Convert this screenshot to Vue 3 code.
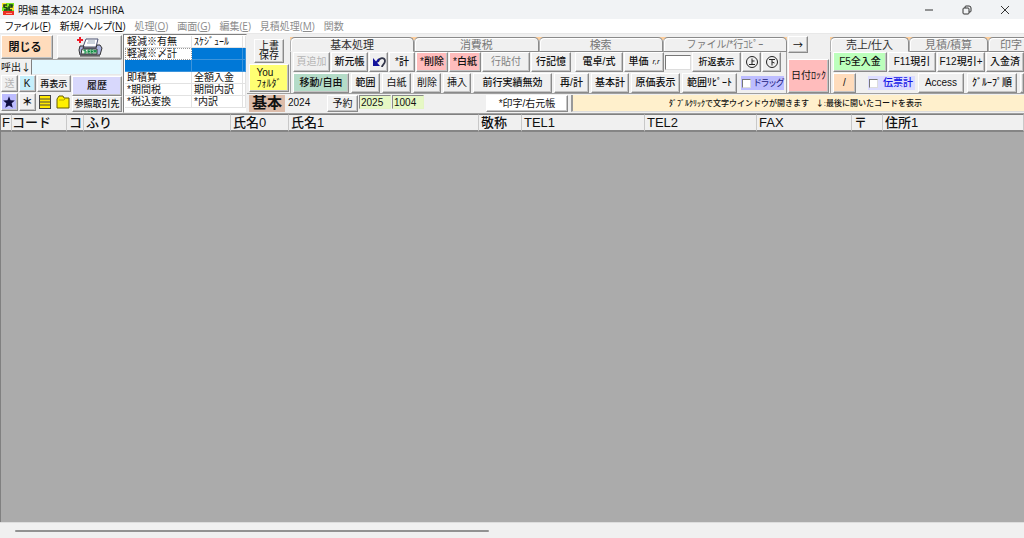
<script setup>
import { ref } from 'vue'

const menus = [
  { label: 'ファイル', key: 'F', on: true },
  { label: '新規/ヘルプ', key: 'N', on: true },
  { label: '処理', key: 'O' },
  { label: '画面', key: 'G' },
  { label: '編集', key: 'E' },
  { label: '見積処理', key: 'M' },
  { label: '関数' },
]
const options = [
  ['軽減※有無', 'ｽｹｼﾞｭｰﾙ', ''],
  ['軽減※〆計', '', 'half'],
  ['', '', 'full'],
  ['即積算', '全額入金', ''],
  ['*期間税', '期間内訳', ''],
  ['*税込変換', '*内訳', ''],
]
const columns = [
  ['F', 'flag'], ['コード', 'code'], ['コ', 'ko'], ['ふり', 'kana'], ['氏名0', 'name0'], ['氏名1', 'name1'],
  ['敬称', 'title'], ['TEL1', 'tel1'], ['TEL2', 'tel2'], ['FAX', 'fax'], ['〒', 'zip'], ['住所1', 'address'],
]
const mainTabs = ['基本処理', '消費税', '検索', 'ファイル/*行ｺﾋﾟｰ']
const sideTabs = ['売上/仕入', '見積/積算', '印字']
const code = ref('')
const price = ref('')
const year = ref('2025')
const number = ref('1004')
const drag = ref(false)
const slip = ref(false)
</script>

<template>
  <div class="window">
    <header class="titlebar">
      <svg class="logo" viewBox="0 0 12 13" aria-hidden="true">
        <rect width="12" height="8" fill="#7be51e" />
        <path d="M0 0h4v4H0zM8 3h4v4H8z" fill="#f5e62a" />
        <path d="M1 8h11v4H1z" fill="#ed3024" />
        <path d="M5 2H2v2l3 1v2H2M7 2h3v2H7v3h3" fill="none" stroke="#153d18" stroke-width="1.6" />
        <path d="M4 10.5h6" stroke="#ff9f96" />
      </svg>
      <h1>明細 基本2024 &nbsp;HSHIRA</h1>
      <div class="winbtns">
        <button type="button" aria-label="最小化"><svg viewBox="0 0 10 10"><path d="M1 5h8" /></svg></button>
        <button type="button" aria-label="元に戻す"><svg viewBox="0 0 10 10"><rect x="1" y="3" width="6" height="6" rx="1" /><path d="M3 3V2q0-1 1-1h3q2 0 2 2v3q0 1-1 1H7" /></svg></button>
        <button type="button" aria-label="閉じる"><svg viewBox="0 0 10 10"><path d="M1 1l8 8M9 1L1 9" /></svg></button>
      </div>
    </header>

    <nav class="menubar">
      <button v-for="m in menus" :key="m.label" type="button" :disabled="!m.on">{{ m.label }}<template v-if="m.key">(<u>{{ m.key }}</u>)</template></button>
    </nav>

    <section class="toolbar">
      <div class="left">
        <div class="row-a">
          <button type="button" class="peach big">閉じる</button>
          <button type="button" aria-label="印刷">
            <svg class="printer" viewBox="0 0 26 20">
              <path d="M9 2h12l-2 8H6z" fill="#fff" stroke="#4a5170" />
              <path d="M11 4h7M10 6h8" stroke="#9ab" />
              <path d="M3 9h4l-1 2h13l1-3h3l2 3-2 7H3l-1-5z" fill="#a9b1dc" stroke="#333" />
              <path d="M5 12h15v5H4z" fill="#e8f5ea" stroke="#333" />
              <path d="M9 13H7v1h2v2H7M13 13h-2v3h2M11 14.500h2M16 13h-2v3h2M14 14.500h2M17 16v-3l1 2 1-2v3" fill="none" stroke="#0a8a40" />
              <path d="M3 19h20" stroke="#333" />
              <path d="M3 0v6M0 3h6" stroke="#f01c28" stroke-width="2" />
            </svg>
          </button>
        </div>
        <div class="row-b">
          <label for="code">呼出<span class="cjk">↓</span></label>
          <input id="code" v-model="code" type="text">
        </div>
        <div class="row-c">
          <div class="small-grid">
            <button type="button" disabled>送</button>
            <button type="button" class="cyan">K</button>
            <button type="button" class="wide strong">再表示</button>
            <button type="button" class="lav" aria-label="お気に入り"><svg viewBox="0 0 12 12"><path d="M6 1l1.300 3.400 3.700.3-2.700 2.400.9 3.900L6 9l-3.200 2 .9-3.900L1 4.700l3.700-.3z" fill="#101040" /></svg></button>
            <button type="button" class="star">＊</button>
            <button type="button" class="flat" aria-label="一覧"><svg viewBox="0 0 14 14"><rect x="1.500" y=".5" width="11" height="13" fill="#ffe800" stroke="#444" /><path d="M2 4h10M2 7h10M2 10h10" stroke="#444" /></svg></button>
            <button type="button" class="flat" aria-label="フォルダ"><svg viewBox="0 0 14 14"><path d="M1 4l2-3h4l1 2h5v10H1z" fill="#fff000" stroke="#665d00" /><path d="M3 5h5l1-1" fill="none" stroke="#b9a800" /></svg></button>
          </div>
          <div class="ref-col">
            <button type="button" class="lilac strong">履歴</button>
            <button type="button" class="strong tiny">参照取引先</button>
          </div>
        </div>
      </div>

      <div class="options">
        <div v-for="(o, i) in options" :key="i" class="option" :class="o[2]">
          <span>{{ o[0] }}</span><span>{{ o[1] }}</span><span></span>
        </div>
      </div>

      <div class="rest">
        <div class="upper">
          <div class="quick">
            <button type="button" class="save">上書<br>保存</button>
            <button type="button" class="you">You<br>ﾌｫﾙﾀﾞ</button>
          </div>

          <div class="tabset main-tabs">
            <div class="tabs">
              <button v-for="(t, i) in mainTabs" :key="t" type="button" :class="{ active: i === 0 }">{{ t }}</button>
            </div>
            <div class="panel">
              <div class="line one">
                <button type="button" disabled>頁追加</button>
                <button type="button" class="strong">新元帳</button>
                <button type="button" aria-label="元に戻す"><svg viewBox="0 0 14 12"><path d="M6 6c1-5 7-5 7-1 0 3-3 4-3 6" fill="none" stroke="#33364a" stroke-width="1.800" /><path d="M1 2v8h7z" fill="#13139c" /><path d="M4 7l3-4" stroke="#13139c" stroke-width="2" /></svg></button>
                <button type="button" class="strong">*計</button>
                <button type="button" class="pink strong">*削除</button>
                <button type="button" class="pink strong">*白紙</button>
                <button type="button" class="dim">行貼付</button>
                <button type="button" class="strong">行記憶</button>
                <span></span>
                <button type="button" class="strong">電卓/式</button>
                <button type="button" class="strong">単価 <small>r,r</small></button>
                <input v-model="price" type="text" aria-label="単価">
                <button type="button" class="strong tiny">折返表示</button>
                <button type="button" class="circle" aria-label="上"><svg viewBox="0 0 14 14"><circle cx="7" cy="7" r="5.500" /><path d="M7 3.500v6M7 6h2.500M4 9.500h6" /></svg></button>
                <button type="button" class="circle" aria-label="下"><svg viewBox="0 0 14 14"><circle cx="7" cy="7" r="5.500" /><path d="M4 4.500h6M7 4.500v6M7 7l2.500 1" /></svg></button>
              </div>
              <div class="line two">
                <button type="button" class="green strong">移動/自由</button>
                <button type="button" class="strong">範囲</button>
                <button type="button">白紙</button>
                <button type="button">削除</button>
                <button type="button">挿入</button>
                <button type="button" class="strong">前行実績無効</button>
                <button type="button" class="strong">再/計</button>
                <button type="button" class="strong">基本計</button>
                <button type="button" class="strong">原価表示</button>
                <button type="button" class="strong">範囲ﾘﾋﾟｰﾄ</button>
                <label class="check lav-check"><input v-model="drag" type="checkbox">ドラッグ</label>
              </div>
            </div>
          </div>

          <div class="lock">
            <button type="button" class="arrow cjk">→</button>
            <button type="button" class="pink date">日付ﾛｯｸ</button>
          </div>

          <div class="tabset side-tabs">
            <div class="tabs">
              <button v-for="(t, i) in sideTabs" :key="t" type="button" :class="{ active: i === 0 }">{{ t }}</button>
            </div>
            <div class="panel">
              <div class="line three">
                <button type="button" class="lime strong">F5全入金</button>
                <button type="button" class="strong">F11現引</button>
                <button type="button" class="strong">F12現引+</button>
                <button type="button" class="strong">入金済</button>
              </div>
              <div class="line four">
                <button type="button" class="peach">/</button>
                <label class="check blue-check"><input v-model="slip" type="checkbox">伝票計</label>
                <button type="button">Access</button>
                <button type="button" class="strong">ｸﾞﾙｰﾌﾟ順</button>
                <button type="button" aria-label="日付"></button>
              </div>
            </div>
          </div>
        </div>

        <div class="status">
          <strong>基本</strong>
          <span class="fiscal">2024</span>
          <button type="button">予約</button>
          <input v-model="year" type="text" aria-label="年">
          <input v-model="number" type="text" aria-label="番号">
          <button type="button" class="ledger">*印字/右元帳</button>
          <p>ﾀﾞﾌﾞﾙｸﾘｯｸで文字ウインドウが開きます &nbsp; <span class="cjk">↓</span>:最後に開いたコードを表示</p>
        </div>
      </div>
    </section>

    <main class="sheet">
      <table>
        <thead>
          <tr><th v-for="c in columns" :key="c[1]" :class="c[1]" scope="col">{{ c[0] }}</th></tr>
        </thead>
      </table>
    </main>
    <div class="scroll"><div class="thumb"></div></div>
  </div>
</template>

<style>
body {
  background: #fff;
}
</style>

<style scoped>
* {
  box-sizing: border-box;
}
.window {
  display: flex;
  flex-direction: column;
  height: 100vh;
  overflow: hidden;
  background: #f0f0f0;
  color: #111;
  font-family: "Liberation Sans", "Noto Sans CJK JP", sans-serif;
  font-size: 10px;
  line-height: 12px;
}
button,
input {
  min-width: 0;
  margin: 0;
  font: inherit;
  color: inherit;
}
.titlebar {
  display: flex;
  align-items: center;
  height: 19px;
  flex: none;
  padding-left: 2px;
  background: #f1f3f5;
}
.logo {
  width: 12px;
  height: 13px;
}
h1 {
  margin: 0 0 0 4px;
  font: 400 10px/14px "Open Sans", "Noto Sans CJK JP", sans-serif;
}
.winbtns {
  display: flex;
  margin-left: auto;
}
.winbtns button {
  display: flex;
  align-items: center;
  justify-content: center;
  width: 38px;
  height: 18px;
  padding: 0;
  border: 0;
  background: none;
}
.winbtns svg {
  width: 10px;
  height: 10px;
  fill: none;
  stroke: #333;
}
.menubar {
  display: flex;
  gap: 9px;
  flex: none;
  height: 15px;
  padding-left: 5px;
  background: #fff;
  border-bottom: 1px solid #e8e8e8;
}
.menubar button {
  padding: 0;
  border: 0;
  background: none;
  font: 400 10px/14px "Open Sans", "Noto Sans CJK JP", sans-serif;
  font-feature-settings: "palt";
  white-space: nowrap;
}
.menubar button:disabled {
  color: #8c8c8c;
}
.toolbar {
  display: flex;
  flex: none;
  height: 80px;
  border-bottom: 1px solid #a0a0a0;
}
.toolbar button {
  display: flex;
  align-items: center;
  justify-content: center;
  padding: 0;
  overflow: hidden;
  white-space: nowrap;
  background: #f0f0f0;
  border: 1px solid;
  border-color: #fff #8a8a8a #8a8a8a #fff;
  box-shadow: inset -1px -1px #c4c4c4;
}
.toolbar .cjk {
  font-family: "Noto Sans CJK JP", sans-serif;
}
.toolbar button.strong {
  font-weight: 500;
}
.toolbar button.tiny {
  font-size: 9px;
}
.toolbar button:disabled {
  color: #b4b4b4;
}
.toolbar button.dim {
  color: #808080;
}
.toolbar button.peach {
  background: #ffdcbc;
}
.toolbar button.big {
  padding-right: 4px;
  font-size: 11px;
  font-weight: 700;
}
.toolbar button.cyan {
  background: #c6effb;
}
.toolbar button.lav {
  background: #bdbdff;
}
.toolbar button.lilac {
  background: #d8d8fc;
}
.toolbar button.pink {
  background: #ffbcbc;
}
.toolbar button.green {
  background: #b4dcc8;
}
.toolbar button.lime {
  background: #bcffbc;
}
.left {
  display: flex;
  flex-direction: column;
  width: 123px;
  flex: none;
  padding: 1px;
}
.row-a {
  display: grid;
  grid-template-columns: 52px 1fr;
  gap: 4px;
  height: 25px;
}
.printer {
  width: 26px;
  height: 20px;
}
.row-b {
  display: flex;
  align-items: center;
  height: 16px;
}
.row-b label {
  width: 30px;
  white-space: nowrap;
}
.row-b input {
  flex: 1;
  height: 16px;
  padding: 0 2px;
  border: 1px solid;
  border-color: #a8a8a8 #e8e8e8 #e8e8e8 #808080;
  background: #e2f8ff;
}
.row-c {
  display: grid;
  grid-template-columns: 70px 1fr;
  gap: 1px;
  flex: 1;
}
.small-grid {
  display: grid;
  grid-template-columns: repeat(4, 1fr);
  grid-template-rows: 17px 18px;
  gap: 1px;
}
.small-grid .wide {
  grid-column: span 2;
  font-size: 9px;
}
.small-grid svg {
  width: 14px;
  height: 14px;
  flex: none;
}
.toolbar .star {
  font-size: 11px;
  font-weight: 700;
}
.toolbar .flat {
  border-color: #f0f0f0;
  box-shadow: none;
}
.ref-col {
  display: grid;
  grid-template-rows: 20px 16px;
  padding-top: 1px;
}
.options {
  width: 124px;
  flex: none;
  height: 79px;
  padding: 1px 0 0 1px;
  background: #fff;
  border: 1px solid;
  border-color: #808080 #f0f0f0 #f0f0f0 #808080;
}
.option {
  display: grid;
  grid-template-columns: 67px 51px 1fr;
  height: 12px;
  line-height: 11px;
  white-space: nowrap;
}
.option span {
  padding-left: 2px;
  border-right: 1px solid #e2e2e2;
  border-bottom: 1px solid #e2e2e2;
}
.half span:not(:first-child),
.full span {
  background: #0078d7;
  border-color: #3c94dc;
}
.half span:first-child {
  border: 1px dotted #999;
  padding-left: 1px;
  line-height: 9px;
}
.rest {
  display: flex;
  flex-direction: column;
  flex: 1;
  min-width: 0;
}
.upper {
  display: flex;
  height: 60px;
  border-bottom: 1px solid #a0a0a0;
}
.quick {
  display: flex;
  flex-direction: column;
  align-items: center;
  width: 43px;
  flex: none;
  padding: 5px 1px 0 2px;
  gap: 1px;
}
.toolbar .save {
  width: 30px;
  height: 24px;
  line-height: 10px;
}
.toolbar .you {
  width: 40px;
  height: 28px;
  background: #ffff73;
  line-height: 11px;
  text-align: left;
}
.tabset {
  display: flex;
  flex-direction: column;
  padding-top: 3px;
}
.main-tabs {
  width: 497px;
  flex: none;
}
.side-tabs {
  flex: 1;
  min-width: 0;
  overflow: hidden;
}
.tabs {
  display: grid;
  grid-template-columns: repeat(4, 1fr);
  height: 15px;
  flex: none;
  background: linear-gradient(#ffcf9c, #ffcf9c) 0 0 / 100% 3px no-repeat;
}
.side-tabs .tabs {
  grid-template-columns: 79px 79px 1fr;
}
.tabs button {
  height: 15px;
  border: 1px solid;
  border-color: #8a8a8a #8a8a8a #8a8a8a #b0b0b0;
  border-radius: 5px 5px 0 0;
  box-shadow: inset 1px 1px #fff;
  color: #777;
  font-size: 11px;
}
.main-tabs .tabs button:last-child {
  font-size: 10px;
}
.tabs button.active {
  border-bottom-color: #f0f0f0;
  color: #333;
}
.side-tabs .tabs button:last-child {
  justify-content: flex-start;
  padding-left: 11px;
  border-right: 0;
  border-top-right-radius: 0;
}
.panel {
  display: flex;
  flex-direction: column;
  gap: 1px;
  flex: 1;
  padding: 0 2px;
  border-left: 1px solid #a0a0a0;
  border-right: 1px solid #a0a0a0;
}
.side-tabs .panel {
  padding-right: 0;
  border-right: 0;
}
.line {
  display: grid;
  gap: 1px;
  height: 20px;
}
.line svg {
  width: 14px;
  height: 14px;
  flex: none;
}
.line input[type="text"] {
  height: 15px;
  align-self: center;
  border: 1px solid;
  border-color: #777 #ddd #ddd #777;
  background: #fff;
}
.one {
  grid-template-columns: 37px 37px 19px 26px 32px 32px 48px 40px 2px 48px 40px 26px 49px 19px 19px;
}
.two {
  grid-template-columns: 56px 29px 29px 28px 28px 79px 35px 38px 49px 55px 1fr;
  column-gap: 2px;
}
.three {
  grid-template-columns: 54px 48px 48px 1fr;
}
.four {
  grid-template-columns: 23px 56px 46px 50px 1fr;
  column-gap: 3px;
}
small {
  margin-left: 4px;
  font-size: 8px;
  font-style: italic;
}
.circle svg {
  fill: none;
  stroke: #222;
}
.check {
  display: flex;
  align-items: center;
  gap: 3px;
  align-self: center;
  height: 14px;
  white-space: nowrap;
}
.check input {
  appearance: none;
  width: 9px;
  height: 9px;
  flex: none;
  border: 1px solid;
  border-color: #777 #ddd #ddd #777;
  background: #fff;
}
.lav-check {
  margin-left: 2px;
  padding-left: 1px;
  background: #bdbdff;
  color: #1a1a80;
  font-size: 9px;
  font-feature-settings: "palt";
}
.blue-check {
  gap: 5px;
  justify-self: end;
  padding: 0 2px 0 1px;
  background: #dcdcff;
  color: #1414e6;
  font-weight: 500;
}
.lock {
  display: flex;
  flex-direction: column;
  gap: 6px;
  width: 43px;
  flex: none;
  padding: 2px 1px 0 1px;
}
.arrow {
  width: 20px;
  height: 17px;
}
.toolbar .date {
  height: 34px;
}
.status {
  display: flex;
  align-items: stretch;
  height: 19px;
  padding: 1px 0 1px 2px;
}
.status strong {
  width: 36px;
  background: #dcbcaa;
  font-size: 15px;
  line-height: 16px;
  text-align: center;
}
.fiscal {
  width: 42px;
  padding-left: 3px;
  line-height: 15px;
}
.status button {
  width: 31px;
}
.status input {
  width: 32px;
  height: 14px;
  margin-left: 1px;
  padding: 0 1px;
  border: 1px solid;
  border-color: #8a8a8a #e4f5c3 #e4f5c3 #8a8a8a;
  background: #e6f8c4;
}
.status .ledger {
  width: 82px;
  margin-left: 62px;
  background: #fff;
}
.status p {
  flex: 1;
  margin: 0 0 0 3px;
  padding-left: 96px;
  overflow: hidden;
  background: #fff0cc;
  border-left: 2px solid #999;
  border-bottom: 1px solid #ddd;
  font-size: 8px;
  font-weight: 500;
  line-height: 15px;
  white-space: nowrap;
}
.sheet {
  flex: 1;
  min-height: 0;
  background: #ababab;
  border-left: 1px solid #808080;
}
table {
  width: 100%;
  table-layout: fixed;
  border-collapse: separate;
  border-spacing: 0;
}
th {
  height: 18px;
  padding: 0 0 0 2px;
  overflow: hidden;
  background: #f0f0f0;
  border-top: 1px solid #808080;
  border-right: 1px solid #c8c8c8;
  border-bottom: 2px solid #858585;
  font-size: 13px;
  font-weight: 500;
  line-height: 15px;
  text-align: left;
  white-space: nowrap;
}
.flag { width: 11px; padding-left: 1px; }
.code { width: 55px; padding-left: 0; }
.ko { width: 17px; }
.kana { width: 147px; }
.name0 { width: 58px; }
.name1 { width: 190px; }
.title { width: 43px; }
.tel1 { width: 123px; }
.tel2 { width: 112px; }
.fax { width: 95px; }
.zip { width: 31px; }
.scroll {
  display: flex;
  align-items: center;
  height: 16px;
  flex: none;
  padding-left: 15px;
  border-top: 1px solid #ddd;
}
.thumb {
  width: 47%;
  height: 2px;
  border-radius: 1px;
  background: #929292;
}
</style>
